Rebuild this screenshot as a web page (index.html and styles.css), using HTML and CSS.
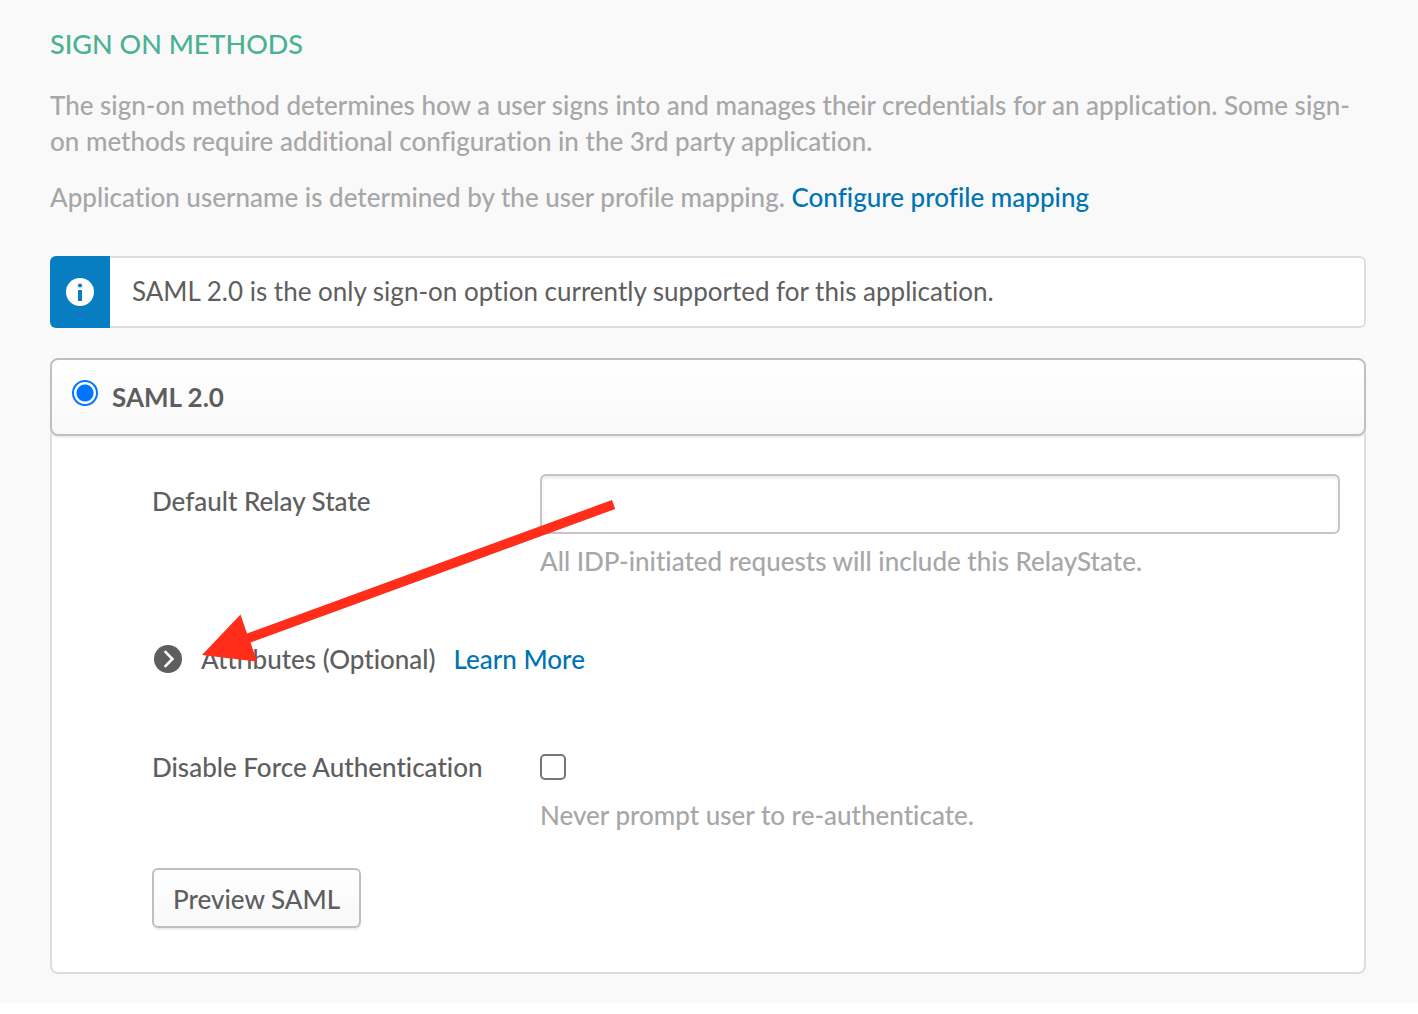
FILE: index.html
```html
<!DOCTYPE html>
<html lang="en">
<head>
<meta charset="utf-8">
<meta name="viewport" content="width=device-width, initial-scale=1">
<title>Sign On Methods</title>
<link rel="stylesheet" href="styles.css">
</head>
<body>
<main class="page">
  <h1 class="title">SIGN ON METHODS</h1>
  <p class="intro">The sign-on method determines how a user signs into and manages their credentials for an application. Some sign-on methods require additional configuration in the 3rd party application.</p>
  <p class="intro">Application username is determined by the user profile mapping. <a class="link" href="#mapping">Configure profile mapping</a></p>

  <div class="notice">
    <div class="notice-icon">
      <svg width="28" height="28" viewBox="0 0 28 28" aria-hidden="true">
        <circle cx="14" cy="14" r="14" fill="#fff"/>
        <circle cx="14" cy="7.5" r="2.1" fill="#077dc2"/>
        <path d="M12 12h4v11h-4z" fill="#077dc2"/>
      </svg>
    </div>
    <p class="notice-text">SAML 2.0 is the only sign-on option currently supported for this application.</p>
  </div>

  <form class="card">
    <div class="card-head">
      <input class="radio" type="radio" id="saml" name="method" checked>
      <label class="method" for="saml">SAML 2.0</label>
    </div>
    <div class="card-body">
      <div class="row">
        <label class="label label-input" for="relay">Default Relay State</label>
        <div class="field">
          <input class="text-input" type="text" id="relay" aria-describedby="relay-hint">
          <p class="hint" id="relay-hint">All IDP-initiated requests will include this RelayState.</p>
        </div>
      </div>
      <div class="attributes">
        <button class="toggle" type="button">
          <svg width="28" height="28" viewBox="0 0 28 28" aria-hidden="true">
            <circle cx="14" cy="14" r="14" fill="#5e5e5e"/>
            <path d="M10.700 6.200l7.700 7.800-7.700 7.800" fill="none" stroke="#fff" stroke-width="2.600"/>
          </svg>
          <span>Attributes (Optional)</span>
        </button>
        <a class="link" href="#learn">Learn More</a>
      </div>
      <div class="row">
        <label class="label" for="force">Disable Force Authentication</label>
        <div class="field">
          <div class="check-line"><input class="checkbox" type="checkbox" id="force" aria-describedby="force-hint"></div>
          <p class="hint hint-check" id="force-hint">Never prompt user to re-authenticate.</p>
        </div>
      </div>
      <button class="preview" type="button">Preview SAML</button>
      <svg class="arrow" width="414" height="162" viewBox="202 500 414 162" aria-hidden="true">
        <path d="M202 655L240.500 614.500L247 633.500L612 500L615.200 509L250.500 642.500L257 661.500Z" fill="#ff2d19"/>
      </svg>
    </div>
  </form>
</main>
</body>
</html>
```
FILE: styles.css
```css
* {
  box-sizing: border-box;
}

body {
  margin: 0;
  background: #fff;
  color: #5e5e5e;
  font: 500 26px/36px Lato, sans-serif;
  font-variant-ligatures: none;
}

.page {
  padding: 28px 52px 29px 50px;
  background: #f9f9f9;
}

.title {
  margin: 0 0 27px;
  color: #4cb192;
  font-size: 27px;
  font-weight: 500;
  line-height: 32px;
}

.intro {
  margin: 0 0 20px;
  color: #a7a7a7;
}

.link {
  color: #0074b3;
  text-decoration: none;
}

.notice {
  display: flex;
  min-height: 72px;
  margin: 41px 0 30px;
  overflow: hidden;
  border-radius: 6px;
}

.notice-icon {
  display: flex;
  flex: 0 0 60px;
  align-items: center;
  justify-content: center;
  background: #077dc2;
}

.notice-text {
  flex: 1;
  margin: 0;
  padding: 15px 22px 17px;
  font-weight: 400;
  background: #fff;
  border: 2px solid #ddd;
  border-left: 0;
  border-radius: 0 6px 6px 0;
}

.card {
  background: #fff;
  border-radius: 8px;
}

.card-head {
  position: relative;
  z-index: 1;
  display: flex;
  gap: 14px;
  padding: 20px;
  background: linear-gradient(#fff, #f9f9f9);
  border: 2px solid #bfbfbf;
  border-radius: 8px;
  box-shadow: 0 2px 0 #f0f0f0;
}

.radio,
.checkbox {
  flex: none;
  width: 26px;
  height: 26px;
  margin: 0;
  appearance: none;
  background: #fff;
}

.radio {
  border: 2px solid #0075ff;
  border-radius: 50%;
  background: radial-gradient(circle, #0075ff 8px, #fff 9px);
}

.checkbox {
  border: 2px solid #767676;
  border-radius: 5px;
}

.method {
  font-weight: 700;
  line-height: 34px;
}

.card-body {
  position: relative;
  margin-top: -8px;
  padding: 46px 24px 44px 100px;
  border: 2px solid #ddd;
  border-top: 0;
  border-radius: 0 0 8px 8px;
}

.row {
  display: grid;
  grid-template-columns: 388px 1fr;
}

.label-input {
  padding-top: 9px;
}

.text-input {
  display: block;
  width: 100%;
  height: 60px;
  padding: 0 16px;
  color: inherit;
  font: inherit;
  background: #fff;
  border: 2px solid #c5c5c5;
  border-radius: 6px;
  box-shadow: inset 0 2px 3px #e8e8e8;
}

.hint {
  margin: 9px 0 0;
  color: #a7a7a7;
}

.hint-check {
  margin-top: 12px;
}

.attributes {
  display: flex;
  gap: 18px;
  margin: 62px 0 72px 2px;
}

.toggle {
  display: flex;
  gap: 19px;
  align-items: center;
  padding: 0;
  color: inherit;
  font: inherit;
  background: none;
  border: 0;
}

.check-line {
  display: flex;
  height: 36px;
  padding-top: 5px;
}

.preview {
  display: block;
  height: 60px;
  margin-top: 35px;
  padding: 2px 19px 0;
  color: inherit;
  font: inherit;
  background: linear-gradient(#fff, #f8f8f8);
  border: 2px solid #bfbfbf;
  border-radius: 6px;
  box-shadow: 0 2px 1px #eee;
}

.arrow {
  position: absolute;
  top: 72px;
  left: 150px;
  pointer-events: none;
}
```
